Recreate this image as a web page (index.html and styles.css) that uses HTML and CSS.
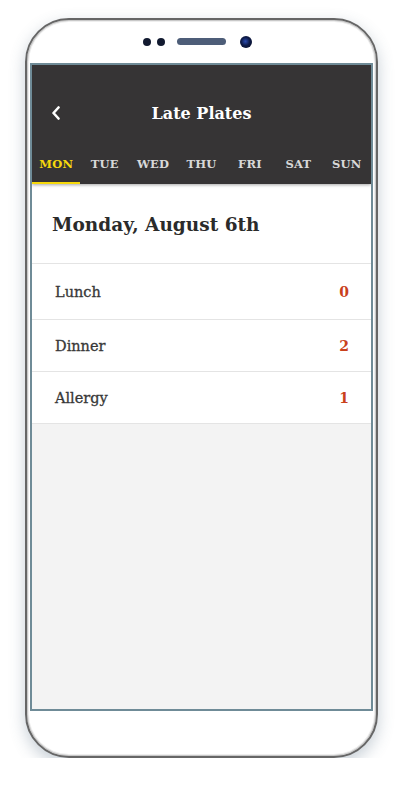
FILE: index.html
```html
<!DOCTYPE html>
<html lang="en">
<head>
  <meta charset="UTF-8" />
  <meta name="viewport" content="width=device-width, initial-scale=1.0"/>
  <title>Late Plates</title>
  <link rel="stylesheet" href="styles.css">
</head>
<body>
  <div class="phone">
    <div class="bezel-top">
      <span class="dot"></span>
      <span class="dot"></span>
      <span class="speaker"></span>
      <span class="camera"></span>
    </div>

    <div class="screen">
      <header class="app-bar">
        <div class="title-row">
          <a href="#" class="back">
            <svg width="10" height="14" viewBox="0 0 10 14">
              <path d="M7.5 1.5 L2.5 7 L7.5 12.5" fill="none" stroke="#fff" stroke-width="2.6" stroke-linecap="round" stroke-linejoin="round"/>
            </svg>
          </a>
          <h1>Late Plates</h1>
        </div>
        <nav class="tabs">
          <a href="#" class="tab active">MON</a>
          <a href="#" class="tab">TUE</a>
          <a href="#" class="tab">WED</a>
          <a href="#" class="tab">THU</a>
          <a href="#" class="tab">FRI</a>
          <a href="#" class="tab">SAT</a>
          <a href="#" class="tab">SUN</a>
        </nav>
      </header>

      <section class="day">
        <h2>Monday, August 6th</h2>
      </section>

      <ul class="counts">
        <li><span>Lunch</span><b>0</b></li>
        <li><span>Dinner</span><b>2</b></li>
        <li><span>Allergy</span><b>1</b></li>
      </ul>
    </div>

    <div class="bezel-bottom"></div>
  </div>
</body>
</html>
```

FILE: styles.css
```css
/* ---- page + phone frame ---- */
body {
  margin: 0;
  background: #fff;
  font-family: 'DejaVu Serif', 'Liberation Serif', serif;
}

.phone {
  margin: 18px 0 0 25px;
  width: 349px;
  height: 736px;
  background: #fff;
  border: 2px solid #666;
  border-radius: 44px;
  box-shadow: inset 0 0 0 1px #c8c8c8, inset 0 0 0 2px #eee, 0 6px 16px rgba(70, 95, 120, 0.3);
  display: flex;
  flex-direction: column;
  align-items: center;
}

.bezel-top {
  height: 43px;
  display: flex;
  align-items: center;
  padding-right: 8px;
}

.dot {
  width: 8px;
  height: 8px;
  border-radius: 50%;
  background: #121a30;
  margin-right: 6px;
}

.dot + .dot {
  margin-right: 12px;
}

.speaker {
  width: 49px;
  height: 7px;
  border-radius: 4px;
  background: #4d5d78;
  margin-right: 14px;
}

.camera {
  width: 12px;
  height: 12px;
  border-radius: 50%;
  background: radial-gradient(circle at 45% 45%, #2a4bb0 0, #0d1a48 45%, #060b1e 100%);
}

.screen {
  width: 339px;
  height: 644px;
  border: 2px solid #6f8b97;
  background: #f3f3f3;
  overflow: hidden;
}

.bezel-bottom {
  flex: 1;
}

/* ---- app bar ---- */
.app-bar {
  background: #363435;
  color: #fff;
  box-shadow: 0 1px 3px rgba(0,0,0,0.35);
  position: relative;
}

.title-row {
  height: 36px;
  padding: 30px 0 13px;
  display: flex;
  align-items: center;
  justify-content: center;
  position: relative;
}

.back {
  position: absolute;
  left: 19px;
  top: 41px;
  display: flex;
}

.title-row h1 {
  margin: 0;
  font-size: 16px;
  font-weight: bold;
}

.tabs {
  display: grid;
  grid-template-columns: repeat(7, 1fr);
  height: 40px;
}

.tab {
  display: flex;
  align-items: center;
  justify-content: center;
  color: #d8d8d8;
  text-decoration: none;
  font-size: 11.5px;
  font-weight: bold;
  letter-spacing: 0.2px;
}

.tab.active {
  color: #f6d90c;
  box-shadow: inset 0 -2px 0 #f6d90c;
}

/* ---- day content ---- */
.day {
  background: #fff;
  height: 79px;
  display: flex;
  align-items: center;
  padding-left: 20px;
  border-bottom: 1px solid #e4e4e4;
}

.day h2 {
  margin: 2px 0 0;
  font-size: 18.5px;
  font-weight: bold;
  color: #2b2b2b;
}

.counts {
  list-style: none;
  margin: 0;
  padding: 0;
  background: #fff;
}

.counts li {
  height: 51px;
  display: flex;
  align-items: center;
  justify-content: space-between;
  padding: 0 22px 0 23px;
  border-bottom: 1px solid #e4e4e4;
  font-size: 14.5px;
  color: #383838;
  -webkit-text-stroke: 0.3px #383838;
}

.counts li:first-child {
  height: 55px;
}

.counts b {
  color: #c9411c;
  font-size: 14px;
  -webkit-text-stroke: 0;
}
```
